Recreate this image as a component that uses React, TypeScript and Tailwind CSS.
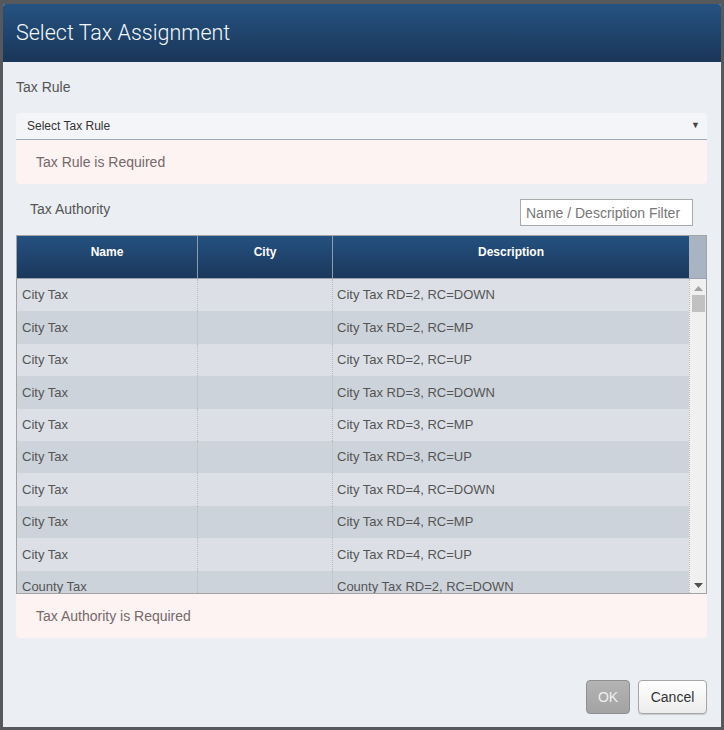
const rows: [string, string, string][] = [
  ["City Tax", "", "City Tax RD=2, RC=DOWN"],
  ["City Tax", "", "City Tax RD=2, RC=MP"],
  ["City Tax", "", "City Tax RD=2, RC=UP"],
  ["City Tax", "", "City Tax RD=3, RC=DOWN"],
  ["City Tax", "", "City Tax RD=3, RC=MP"],
  ["City Tax", "", "City Tax RD=3, RC=UP"],
  ["City Tax", "", "City Tax RD=4, RC=DOWN"],
  ["City Tax", "", "City Tax RD=4, RC=MP"],
  ["City Tax", "", "City Tax RD=4, RC=UP"],
  ["County Tax", "", "County Tax RD=2, RC=DOWN"],
];

export default function App() {
  return (
    <div className="h-[730px] w-[724px] bg-[#55595d] pl-[3px] pt-[4px] font-['Liberation_Sans',Arial,sans-serif]">
      <div className="flex h-[723px] w-[718px] flex-col overflow-hidden rounded-t-[3px] bg-[#ebeef2]">
        <div className="flex h-[58px] shrink-0 items-center bg-gradient-to-b from-[#255382] to-[#1a3658] pl-[13px]">
          <h1 className="font-['Roboto',sans-serif] text-[21.5px] font-light text-[#f4f7fa]">Select Tax Assignment</h1>
        </div>

        <div className="flex flex-1 flex-col pl-[13px] pr-[14px]">
          <div className="pt-[15px] text-[14px] leading-[21px] text-[#555]">Tax Rule</div>

          <div className="mt-[15px] flex h-[27px] items-center justify-between rounded-t-[3px] border-b border-[#9eabbb] bg-[#f3f5f8] pl-[11px] pr-[7px]">
            <span className="text-[12px] text-[#333]">Select Tax Rule</span>
            <span className="text-[9px] text-[#444]">▼</span>
          </div>
          <div className="flex h-[44px] items-center rounded-b-[4px] bg-[#fdf3f3] pl-[20px] text-[14px] text-[#76696a]">
            Tax Rule is Required
          </div>

          <div className="mt-[15px] flex items-start justify-between">
            <span className="pl-[14px] text-[14px] leading-[21px] text-[#555]">Tax Authority</span>
            <input
              placeholder="Name / Description Filter"
              className="mr-[14px] h-[27px] w-[173px] border border-[#ababab] bg-white px-[5px] text-[14px] text-[#333] placeholder:text-[#777] outline-none"
            />
          </div>

          <div className="mt-[9px] border border-[#a3a3a3]">
            <div className="flex h-[42px] bg-gradient-to-b from-[#245180] to-[#1b385c] text-[12px] font-bold text-white">
              <div className="w-[180px] pt-[7px] text-center">Name</div>
              <div className="w-[135px] border-l border-[#8d9db0] pt-[7px] text-center">City</div>
              <div className="flex-1 border-l border-[#8d9db0] pt-[7px] text-center">Description</div>
              <div className="w-[17px] bg-[#a8b4c1]" />
            </div>
            <div className="flex h-[315px] overflow-hidden border-t border-[#9aa3ad]">
              <div className="flex-1">
                {rows.map((r, i) => (
                  <div
                    key={i}
                    className={`flex h-[32.4px] shrink-0 items-center text-[13px] text-[#555] ${i % 2 === 0 ? "bg-[#dce0e6]" : "bg-[#cdd3da]"}`}
                  >
                    <div className="w-[180px] pl-[5px]">{r[0]}</div>
                    <div className="h-full w-[135px] border-l border-dotted border-[#b9bcc0]">{r[1]}</div>
                    <div className="flex h-full flex-1 items-center border-l border-dotted border-[#b9bcc0] pl-[4px]">{r[2]}</div>
                  </div>
                ))}
              </div>
              <div className="flex w-[17px] flex-col items-center border-l border-dotted border-[#b9bcc0] bg-[#f0f0f0]">
                <svg width="9" height="5" viewBox="0 0 9 5" className="mt-[7px]">
                  <path d="M0 5 L4.5 0 L9 5 Z" fill="#a3a3a3" />
                </svg>
                <div className="mt-[4px] h-[17px] w-[13px] bg-[#c1c1c1]" />
                <div className="flex-1" />
                <svg width="9" height="5" viewBox="0 0 9 5" className="mb-[5px]">
                  <path d="M0 0 L9 0 L4.5 5 Z" fill="#505050" />
                </svg>
              </div>
            </div>
          </div>
          <div className="flex h-[44px] items-center rounded-b-[4px] bg-[#fdf3f3] pl-[20px] text-[14px] text-[#76696a]">
            Tax Authority is Required
          </div>

          <div className="mt-[42px] flex justify-end gap-[8px]">
            <button className="h-[34px] w-[44px] rounded-[4px] border border-[#8f8f8f] bg-gradient-to-b from-[#b3b3b3] to-[#a3a3a3] text-[14px] text-[#f0f0f0]">
              OK
            </button>
            <button className="h-[34px] w-[69px] rounded-[4px] border border-[#a6a6a6] bg-gradient-to-b from-[#ffffff] to-[#ececec] text-[14px] text-[#333] shadow-[0_1px_1px_rgba(0,0,0,0.15)]">
              Cancel
            </button>
          </div>
        </div>
      </div>
    </div>
  );
}
